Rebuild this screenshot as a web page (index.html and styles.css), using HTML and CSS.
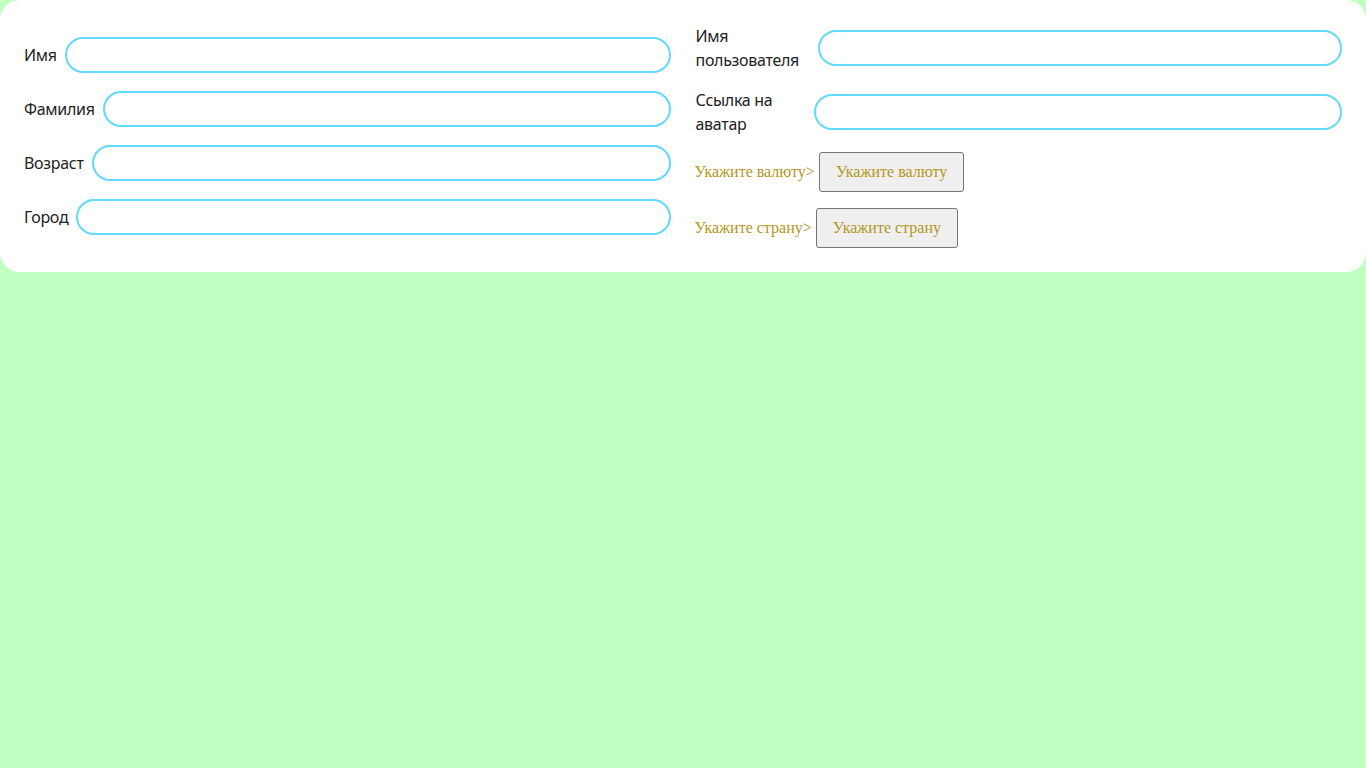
FILE: index.html
```html
<!DOCTYPE html>
<html lang="ru">
<head>
<meta charset="utf-8">
<title>Профиль</title>
<link rel="stylesheet" href="styles.css">
</head>
<body>
<form class="card">
  <div class="col col-left">
    <label class="row"><span class="label">Имя</span><input class="field" type="text"></label>
    <label class="row"><span class="label">Фамилия</span><input class="field" type="text"></label>
    <label class="row"><span class="label">Возраст</span><input class="field" type="text"></label>
    <label class="row"><span class="label">Город</span><input class="field" type="text"></label>
  </div>
  <div class="col col-right">
    <label class="row"><span class="label label-user">Имя пользователя</span><input class="field" type="text"></label>
    <label class="row"><span class="label label-avatar">Ссылка на аватар</span><input class="field" type="text"></label>
    <div class="row pick"><span class="pick-label">Укажите валюту&gt;</span><button class="pick-btn" type="button">Укажите валюту</button></div>
    <div class="row pick"><span class="pick-label">Укажите страну&gt;</span><button class="pick-btn" type="button">Укажите страну</button></div>
  </div>
</form>
</body>
</html>
```
FILE: styles.css
```css
html, body {
  margin: 0;
  padding: 0;
}
body {
  background: #c1ffc1;
  min-height: 100vh;
  font-family: "Noto Sans", "Open Sans", sans-serif;
  font-size: 16px;
  color: #222;
}
.card {
  background: #fff;
  border-radius: 20px;
  padding: 24px;
  display: grid;
  grid-template-columns: 1fr 1fr;
  column-gap: 25px;
  align-items: center;
}
.col {
  display: flex;
  flex-direction: column;
}
.col-left { gap: 18px; }
.col-right { gap: 16px; }
.row {
  display: flex;
  align-items: center;
}
.label {
  flex-shrink: 0;
  margin-right: 8px;
  line-height: 24px;
  letter-spacing: -0.3px;
  color: #222;
}
.label-user { width: 114px; }
.label-avatar { width: 110px; }
.field {
  flex: 1;
  min-width: 0;
  box-sizing: border-box;
  height: 36px;
  border: 2px solid #61dafb;
  border-radius: 18px;
  padding: 0 16px;
  font: inherit;
  outline: none;
  background: #fff;
}
.pick-label,
.pick-btn {
  font-family: "Liberation Serif", "Times New Roman", serif;
  font-size: 16px;
  color: #b4961c;
}
.pick-label {
  margin-left: -1px;
  margin-right: 4px;
}
.pick-btn {
  box-sizing: border-box;
  height: 40px;
  padding: 0 16px;
  background: #efefef;
  border: 1px solid #767676;
  border-radius: 3px;
}
```
